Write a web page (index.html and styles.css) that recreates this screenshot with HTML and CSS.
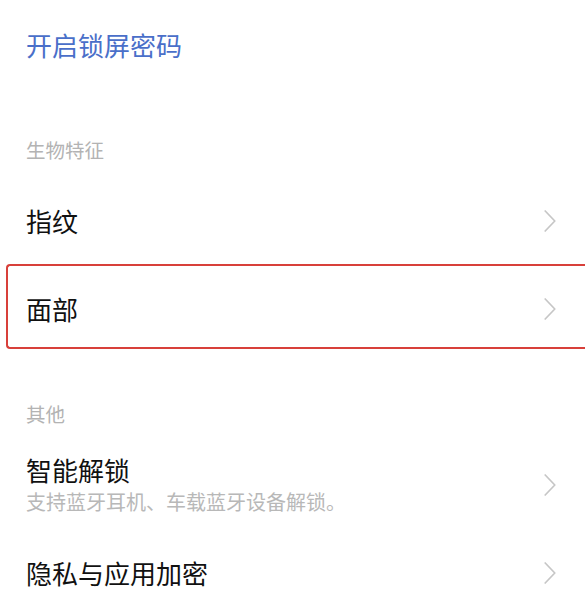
FILE: index.html
```html
<!DOCTYPE html>
<html lang="zh-CN">
<head>
<meta charset="utf-8">
<title>锁屏密码</title>
<link rel="stylesheet" href="styles.css">
</head>
<body>
<div class="page">
  <div class="title">开启锁屏密码</div>

  <div class="section-header">生物特征</div>
  <div class="row">
    <span class="label">指纹</span>
    <svg class="chev" width="12" height="22" viewBox="0 0 12 22"><path d="M1.2 1 L10.8 11 L1.2 21" fill="none" stroke="#c6c6c6" stroke-width="1.7" stroke-linecap="round" stroke-linejoin="round"/></svg>
  </div>
  <div class="row row-highlight">
    <span class="label">面部</span>
    <svg class="chev" width="12" height="22" viewBox="0 0 12 22"><path d="M1.2 1 L10.8 11 L1.2 21" fill="none" stroke="#c6c6c6" stroke-width="1.7" stroke-linecap="round" stroke-linejoin="round"/></svg>
  </div>

  <div class="section-header">其他</div>
  <div class="row">
    <div class="text">
      <div class="label">智能解锁</div>
      <div class="sub">支持蓝牙耳机、车载蓝牙设备解锁。</div>
    </div>
    <svg class="chev" width="12" height="22" viewBox="0 0 12 22"><path d="M1.2 1 L10.8 11 L1.2 21" fill="none" stroke="#c6c6c6" stroke-width="1.7" stroke-linecap="round" stroke-linejoin="round"/></svg>
  </div>
  <div class="row">
    <span class="label">隐私与应用加密</span>
    <svg class="chev" width="12" height="22" viewBox="0 0 12 22"><path d="M1.2 1 L10.8 11 L1.2 21" fill="none" stroke="#c6c6c6" stroke-width="1.7" stroke-linecap="round" stroke-linejoin="round"/></svg>
  </div>
</div>
</body>
</html>
```

FILE: styles.css
```css
html, body {
  margin: 0;
  padding: 0;
  background: #ffffff;
}
body {
  font-family: "Noto Sans CJK SC", "Noto Sans", sans-serif;
  overflow: hidden;
  width: 585px;
  height: 598px;
}
.page {
  display: flex;
  flex-direction: column;
}
.title {
  height: 89px;
  line-height: 89px;
  padding-left: 26px;
  font-size: 26px;
  color: #4a6fc9;
}
.section-header {
  padding: 47px 0 13px 26px;
  height: 28px;
  line-height: 28px;
  font-size: 19.5px;
  color: #b3b3b3;
}
.row {
  height: 88px;
  display: flex;
  align-items: center;
  justify-content: space-between;
  padding: 0 29px 0 26px;
  box-sizing: border-box;
}
.label {
  font-size: 26px;
  line-height: 34px;
  color: #111111;
}
.sub {
  font-size: 20px;
  line-height: 30px;
  color: #b8b8b8;
}
.chev {
  flex: none;
  display: block;
}
.row-highlight {
  height: 85px;
  margin: -1px 0 4px 6px;
  padding: 4px 29px 0 18px;
  border: 2px solid #d8403a;
  border-right: none;
  border-radius: 4px 0 0 4px;
}
```
